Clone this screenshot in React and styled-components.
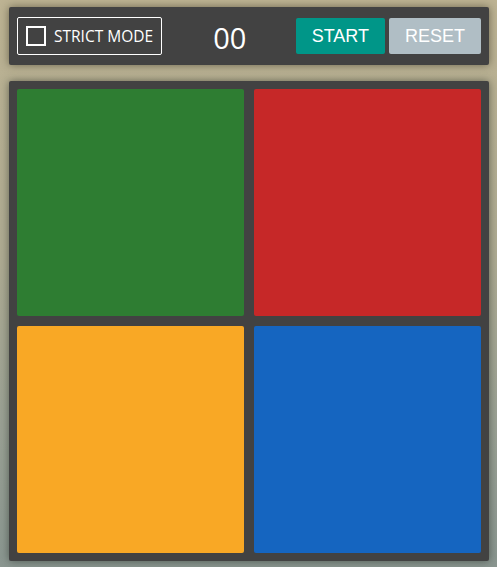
import React, { useState } from "react";
import styled, { createGlobalStyle } from "styled-components";

const GlobalStyle = createGlobalStyle`
  html, body {
    margin: 0;
    padding: 0;
  }
  body {
    min-height: 567px;
    background: linear-gradient(to bottom, #bdb393 0%, #aeab92 45%, #9aa194 75%, #8a9690 100%);
    font-family: "Open Sans", "Liberation Sans", sans-serif;
  }
`;

const Page = styled.div`
  width: 480px;
  padding: 7px 0 0 9px;
  display: flex;
  flex-direction: column;
  gap: 16px;
`;

const TopBar = styled.div`
  height: 58px;
  padding: 0 8px;
  box-sizing: border-box;
  display: flex;
  align-items: center;
  background: #424242;
  border-radius: 2px;
  box-shadow: 0 0 8px rgba(40, 36, 20, 0.55);
`;

const StrictToggle = styled.label`
  width: 145px;
  height: 38px;
  box-sizing: border-box;
  display: flex;
  align-items: center;
  gap: 8px;
  padding: 0 8px;
  border: 1px solid #fff;
  border-radius: 2px;
  color: #fff;
  font-size: 15.5px;
  white-space: nowrap;
  cursor: pointer;
`;

const CheckBox = styled.span`
  flex: none;
  width: 20px;
  height: 20px;
  box-sizing: border-box;
  border: 2px solid #fff;
  background: ${({ checked }) => (checked ? "#fff" : "transparent")};
`;

const Counter = styled.div`
  flex: 1;
  text-align: center;
  color: #fff;
  font-size: 29px;
  line-height: 1;
  padding: 2px 0 0 2px;
`;

const Buttons = styled.div`
  display: flex;
  gap: 4px;
`;

const Button = styled.button`
  height: 36px;
  padding: 0 16px;
  border: none;
  border-radius: 2px;
  background: ${({ color }) => color};
  color: #fff;
  font-family: "Liberation Sans", Arial, sans-serif;
  font-size: 18px;
  cursor: pointer;
`;

const Board = styled.div`
  display: grid;
  grid-template-columns: 1fr 1fr;
  grid-auto-rows: 227px;
  gap: 10px;
  padding: 8px;
  background: #424242;
  border-radius: 2px;
  box-shadow: 0 0 8px rgba(30, 36, 30, 0.55);
`;

const Pad = styled.div`
  background: ${({ color }) => color};
  border-radius: 2px;
`;

const pads = ["#2e7d32", "#c62828", "#f9a825", "#1565c0"];

export default function App() {
  const [strict, setStrict] = useState(false);
  return (
    <>
      <GlobalStyle />
      <Page>
        <TopBar>
          <StrictToggle onClick={() => setStrict(!strict)}>
            <CheckBox checked={strict} />
            STRICT MODE
          </StrictToggle>
          <Counter>00</Counter>
          <Buttons>
            <Button color="#009688">START</Button>
            <Button color="#b0bec5">RESET</Button>
          </Buttons>
        </TopBar>
        <Board>
          {pads.map((c) => (
            <Pad key={c} color={c} />
          ))}
        </Board>
      </Page>
    </>
  );
}
